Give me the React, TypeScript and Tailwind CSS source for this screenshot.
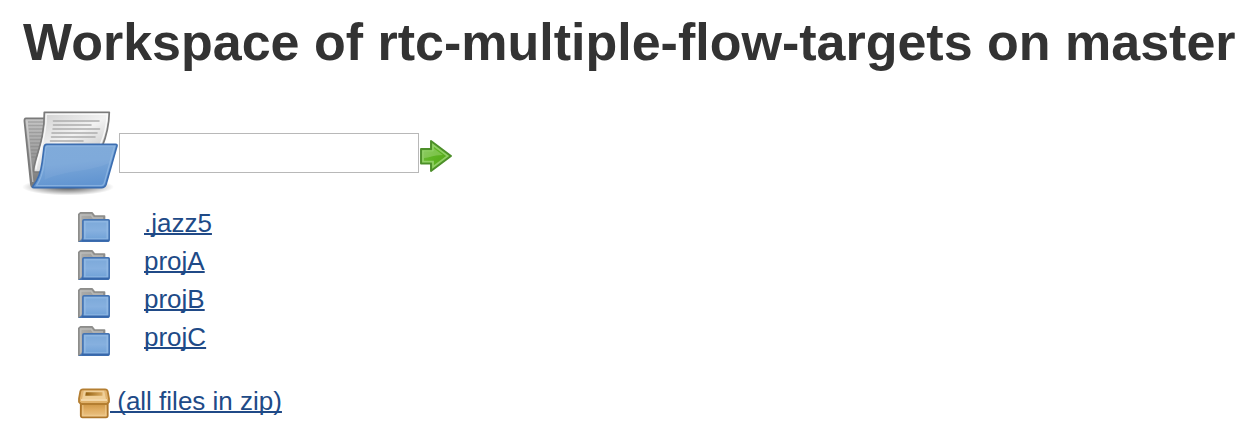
const directories = ['.jazz5', 'projA', 'projB', 'projC'];

const linkClass =
  'text-[#204a87] underline decoration-[2px] underline-offset-[1px] [text-decoration-skip-ink:none]';

function OpenFolderIcon() {
  return (
    <svg viewBox="0 0 96 96" className="block h-24 w-24 shrink-0" aria-hidden="true">
      <defs>
        <radialGradient id="ofShadow">
          <stop offset="0" stopColor="#000" stopOpacity=".7" />
          <stop offset=".5" stopColor="#000" stopOpacity=".35" />
          <stop offset="1" stopColor="#000" stopOpacity="0" />
        </radialGradient>
        <linearGradient id="ofBack" x1="0" y1="0" x2="0" y2="1">
          <stop offset="0" stopColor="#c6c6c6" />
          <stop offset=".5" stopColor="#9e9e9e" />
          <stop offset="1" stopColor="#777" />
        </linearGradient>
        <linearGradient id="ofPaper" x1="0" y1="0" x2=".7" y2="1">
          <stop offset="0" stopColor="#cccccc" />
          <stop offset=".5" stopColor="#f2f2f2" />
          <stop offset="1" stopColor="#bdbdbd" />
        </linearGradient>
        <linearGradient id="ofFront" x1="0" y1="0" x2=".2" y2="1">
          <stop offset="0" stopColor="#7aa7d8" />
          <stop offset=".5" stopColor="#79a6d8" />
          <stop offset="1" stopColor="#6295d1" />
        </linearGradient>
      </defs>
      <ellipse cx="46" cy="84" rx="46" ry="8.5" fill="url(#ofShadow)" />
      <path d="M4 15.3H24L30 20V84H11C9.5 84 9 83 8.8 80L2.5 18.5C2.3 16.3 2.8 15.3 4 15.3Z" fill="url(#ofBack)" stroke="#7a7a7a" strokeWidth="1.8" />
      <path d="M4.8 17.6L10.8 79" stroke="#d4d4d4" strokeOpacity=".7" strokeWidth="1.3" />
      <path d="M6 19H22M6.3 22.5H22M6.7 26H21M7 29.5H21M7.4 33H20M7.7 36.5H19M8.1 40H18M8.5 43.5H17M8.8 47H16M9.2 50.5H15M9.6 54H14" stroke="#777" strokeOpacity=".4" strokeWidth="1.4" />
      <path d="M22.3 9.3H87.3C87 23 84.5 33 80 44L28 44L20 69H12.5C11.7 69 11.5 68 11.8 66C13.3 53 22.8 37 22.3 9.3Z" fill="url(#ofPaper)" stroke="#7b7b7b" strokeWidth="1.7" strokeLinejoin="round" />
      <path d="M14 66.5C15 53 24.5 38 24.3 11.2H85.3C84.5 24 82 33 78.5 41" fill="none" stroke="#fff" strokeOpacity=".75" strokeWidth="1.4" />
      <path d="M31.5 18H77M31.5 22H69M31 26H77.5M30 30H75M29.5 34H73M28.5 38H61" stroke="#adadad" strokeWidth="1.6" strokeLinecap="round" />
      <path d="M24.5 41.3H93.5C95 41.3 95.3 42 94.8 43.5L84 81.5C83 84 82 84.7 79.5 84.7H12C10.2 84.7 10.2 84 11.2 82.8C16 77 19 68.5 20.2 59L22 44.5C22.3 42.2 22.8 41.3 24.5 41.3Z" fill="url(#ofFront)" stroke="#3c6eb1" strokeWidth="1.7" strokeLinejoin="round" />
      <path d="M25 43.2H92.5L82.2 80.2C81.5 82 80.8 82.6 79 82.6H14.5C18.5 77 21 69 22.1 59.5L24 44.5Z" fill="none" stroke="#9bbfe8" strokeOpacity=".6" strokeWidth="1.3" />
      <path d="M25 44H91.8L87.5 60C68 69 42 67 22.5 77C23 66 23.8 55 25 44Z" fill="#fff" fillOpacity=".05" />
    </svg>
  );
}

function FolderIcon() {
  return (
    <svg viewBox="0 0 32 32" className="block h-8 w-8 shrink-0" aria-hidden="true">
      <defs>
        <linearGradient id="fBack" x1="0" y1="0" x2="1" y2="0">
          <stop offset="0" stopColor="#adadab" />
          <stop offset="1" stopColor="#969694" />
        </linearGradient>
        <linearGradient id="fFront" x1="0" y1="0" x2="0" y2="1">
          <stop offset="0" stopColor="#7ba8d9" />
          <stop offset=".5" stopColor="#86b0df" />
          <stop offset="1" stopColor="#6c9fd6" />
        </linearGradient>
      </defs>
      <path d="M.8 31.2V4.3L2.5 2.8H14L16.5 6H26.5V31.2Z" fill="url(#fBack)" stroke="#8d8d8b" strokeWidth="1.7" strokeLinejoin="round" />
      <path d="M2.7 29V5H13.2L15.2 8H25" fill="none" stroke="#c0c0be" strokeOpacity=".75" strokeWidth="1.5" />
      <path d="M6 9.8H30Q31.2 9.8 31.2 11V29.5Q31.2 31.2 29.5 31.2H3Q4.9 30 4.9 27.5V11Q4.9 9.8 6 9.8Z" fill="url(#fFront)" stroke="#4574b3" strokeWidth="1.7" />
      <path d="M6.8 29.2V11.7H29.3V29.2Z" fill="none" stroke="#96bce6" strokeOpacity=".7" strokeWidth="1.7" />
      <path d="M4 30.5H31" stroke="#3667ab" strokeWidth="2" />
    </svg>
  );
}

function ArrowIcon() {
  return (
    <svg viewBox="0 0 32 32" className="block h-8 w-8 shrink-0" aria-hidden="true">
      <defs>
        <linearGradient id="arrowFill" x1="0" y1="0" x2=".8" y2=".5">
          <stop offset="0" stopColor="#78bd4d" />
          <stop offset=".6" stopColor="#5fb524" />
          <stop offset="1" stopColor="#58ad1c" />
        </linearGradient>
      </defs>
      <path d="M1 9H11V1L31 16L11 31V23.5H1Z" fill="url(#arrowFill)" stroke="#4d8f2a" strokeWidth="1.9" strokeLinejoin="round" />
      <path d="M3 21.6V11H13V5L27.7 16L13 27V21.6Z" fill="none" stroke="#a6dc83" strokeOpacity=".7" strokeWidth="1.7" />
      <path d="M4 18C10 18 12 15 23 15L14 8.5V12H4Z" fill="#d3f0ba" fillOpacity=".28" />
    </svg>
  );
}

function PackageIcon() {
  return (
    <svg viewBox="0 0 32 32" className="block h-8 w-8 shrink-0" aria-hidden="true">
      <defs>
        <linearGradient id="boxFront" x1="0" y1="0" x2="0" y2="1">
          <stop offset="0" stopColor="#c88f3c" />
          <stop offset=".5" stopColor="#e0ad62" />
          <stop offset="1" stopColor="#ecc487" />
        </linearGradient>
        <linearGradient id="boxLip" x1="0" y1="0" x2="0" y2="1">
          <stop offset="0" stopColor="#e2b572" />
          <stop offset="1" stopColor="#e0b16a" />
        </linearGradient>
        <linearGradient id="boxSlot" x1="0" y1="0" x2="1" y2="0">
          <stop offset="0" stopColor="#93600f" />
          <stop offset="1" stopColor="#d9aa60" />
        </linearGradient>
      </defs>
      <path d="M2.8 15H29.7V28.5Q29.7 30.3 28 30.3H4.5Q2.8 30.3 2.8 28.5Z" fill="url(#boxFront)" stroke="#ad752a" strokeWidth="1.8" />
      <path d="M4.8 18V28.4H27.7V18" fill="none" stroke="#f1ce94" strokeOpacity=".6" strokeWidth="1.5" />
      <path d="M4.8 2.3H27.2Q29 2.3 29.6 4L31 11.5V15L29 17H3L1 15V11.5L2.4 4Q3 2.3 4.8 2.3Z" fill="url(#boxLip)" stroke="#b47e31" strokeWidth="1.8" />
      <path d="M5.8 3.8H26.2L28 12.3H4Z" fill="#efcf98" />
      <path d="M7.8 5.3H24.5V8.7H7.3Z" fill="url(#boxSlot)" />
      <path d="M3 13H29" stroke="#f5dcae" strokeWidth="1.8" />
    </svg>
  );
}

export default function App() {
  return (
    <main className="h-[440px] w-full overflow-hidden bg-white pl-[22px] pt-3 font-['Liberation_Sans',Arial,sans-serif] text-[26px] leading-[38px]">
      <h1 className="ml-px whitespace-nowrap text-[52px] font-bold leading-[60px] text-[#333333]">
        Workspace of rtc-multiple-flow-targets on master
      </h1>
      <form className="mt-[31px] flex h-24 items-start" onSubmit={(event) => event.preventDefault()}>
        <OpenFolderIcon />
        <input
          type="text"
          aria-label="Path"
          className="ml-px mt-[30px] h-10 w-[300px] border border-[#b8b8b8] bg-white px-1 outline-none"
        />
        <button type="submit" aria-label="Go" className="ml-px mt-[37px]">
          <ArrowIcon />
        </button>
      </form>
      <ul className="mt-[5px] pl-14">
        {directories.map((name) => (
          <li key={name} className="flex h-[38px] items-start">
            <span className="mt-1.5">
              <FolderIcon />
            </span>
            <a href="#" className={`ml-[34px] ${linkClass}`}>{name}</a>
          </li>
        ))}
      </ul>
      <div className="mt-[26px] flex items-start pl-14">
        <span className="mt-[5px]">
          <PackageIcon />
        </span>
        <a href="#" className={`whitespace-pre ${linkClass}`}> (all files in zip)</a>
      </div>
    </main>
  );
}
